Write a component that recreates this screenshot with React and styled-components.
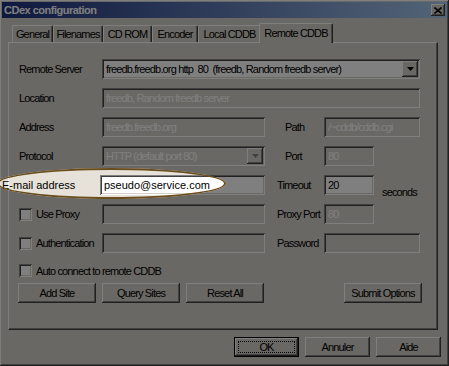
import React from "react";
import styled, { createGlobalStyle } from "styled-components";

const FACE = "#d4d0c8";
const SHADOW = "#808080";
const DARK = "#404040";
const GREYED = "#ffffff";
const UI = `"Liberation Sans", Arial, sans-serif`;

const GlobalStyle = createGlobalStyle`
  html, body {
    margin: 0;
    padding: 0;
    background: ${FACE};
    overflow: hidden;
  }
  body {
    font-family: ${UI};
    font-size: 11px;
    letter-spacing: -0.85px;
    color: #000;
  }
`;

const raised = `
  box-shadow: inset -1px -1px ${DARK}, inset 1px 1px #fff,
    inset -2px -2px ${SHADOW}, inset 2px 2px ${FACE};
`;

const sunken = `
  box-shadow: inset 1px 1px ${SHADOW}, inset -1px -1px #fff,
    inset 2px 2px ${DARK}, inset -2px -2px ${FACE};
`;

const Window = styled.div`
  position: relative;
  z-index: 0;
  width: 449px;
  height: 366px;
  box-sizing: border-box;
  padding: 2px;
  background: ${FACE};
  ${raised}
  display: flex;
  flex-direction: column;
`;

const TitleBar = styled.div`
  height: 16px;
  display: flex;
  align-items: center;
  justify-content: space-between;
  padding: 0 2px;
  background: linear-gradient(to right, #1e307c, #a6caf0);
`;

const Title = styled.span`
  font-weight: bold;
  font-size: 11px;
  letter-spacing: -0.5px;
  color: #fff;
`;

const CloseButton = styled.div`
  width: 14px;
  height: 12px;
  background: ${FACE};
  ${raised}
  display: flex;
  align-items: center;
  justify-content: center;
`;

const TabStrip = styled.div`
  display: flex;
  align-items: flex-end;
  height: 19px;
  margin: 5px 0 0 8px;
  padding-left: 2px;
`;

const Tab = styled.div`
  position: relative;
  z-index: ${(p) => (p.$active ? 2 : 1)};
  box-sizing: border-box;
  width: ${(p) => p.$w + (p.$active ? 4 : 0)}px;
  height: ${(p) => (p.$active ? 20 : 17)}px;
  margin: 0 ${(p) => (p.$active ? -2 : 0)}px ${(p) => (p.$active ? -1 : 0)}px;
  padding-bottom: ${(p) => (p.$active ? 2 : 0)}px;
  display: flex;
  align-items: center;
  justify-content: center;
  background: ${FACE};
  border-top: 1px solid #fff;
  border-left: 1px solid #fff;
  border-right: 1px solid ${DARK};
  border-radius: 2px 2px 0 0;
  box-shadow: inset -1px 0 ${SHADOW};
  white-space: nowrap;
`;

const Panel = styled.div`
  box-sizing: border-box;
  width: 430px;
  height: 288px;
  margin-left: 6px;
  padding: 16px 0 0 10px;
  border-top: 1px solid #fff;
  border-left: 1px solid #fff;
  border-right: 1px solid ${DARK};
  border-bottom: 1px solid ${DARK};
  box-shadow: inset -1px -1px ${SHADOW};
`;

const Form = styled.div`
  display: grid;
  grid-template-columns: 83px 163px 59px 96px;
  grid-auto-rows: 20px;
  row-gap: 9px;
`;

const Label = styled.span`
  grid-column: ${(p) => p.$col || "1"};
  align-self: center;
  padding-left: ${(p) => p.$indent || 0}px;
  margin-left: ${(p) => p.$shift || 0}px;
  white-space: nowrap;
  ${(p) => p.$plain && `letter-spacing: 0;`}
`;

const Cell = styled.div`
  grid-column: ${(p) => p.$col || "auto"};
  display: flex;
  align-items: center;
  gap: 8px;
`;

const Field = styled.div`
  grid-column: ${(p) => p.$col || "auto"};
  position: relative;
  box-sizing: border-box;
  width: ${(p) => (p.$w ? `${p.$w}px` : "auto")};
  height: 20px;
  margin-left: ${(p) => p.$shift || 0}px;
  padding: 0 4px;
  display: flex;
  align-items: center;
  white-space: pre;
  overflow: hidden;
  background: ${(p) => (p.$disabled ? FACE : "#fff")};
  color: ${(p) => (p.$disabled ? GREYED : "#000")};
  ${sunken}
  ${(p) => p.$plain && `letter-spacing: 0;`}
`;

const DropButton = styled.div`
  position: absolute;
  top: 2px;
  right: 2px;
  width: 16px;
  height: 16px;
  background: ${FACE};
  ${raised}
  display: flex;
  align-items: center;
  justify-content: center;
`;

const Unit = styled.span`
  align-self: flex-end;
  margin-bottom: -3px;
`;

const Check = styled.label`
  grid-column: ${(p) => p.$col || "1"};
  display: flex;
  align-items: center;
  gap: 4px;
  white-space: nowrap;
`;

const Box = styled.span`
  width: 13px;
  height: 13px;
  box-sizing: border-box;
  background: #fff;
  ${sunken}
`;

const AutoRow = styled(Check)`
  margin-top: 11px;
  height: 13px;
`;

const ButtonRow = styled.div`
  display: grid;
  grid-template-columns: 78px 78px 78px 1fr 78px;
  column-gap: 6px;
  width: 404px;
  margin: 6px 0 0 -1px;
`;

const Button = styled.div`
  grid-column: ${(p) => p.$col || "auto"};
  box-sizing: border-box;
  height: 20px;
  display: flex;
  align-items: center;
  justify-content: center;
  background: ${FACE};
  ${raised}
  ${(p) =>
    p.$default &&
    `
    border: 1px solid #000;
    outline: 1px dotted #000;
    outline-offset: -5px;
  `}
`;

const DialogButtons = styled.div`
  display: grid;
  grid-template-columns: repeat(3, 65px);
  column-gap: 6px;
  justify-content: end;
  margin: 7px 6px 0 0;
`;

const SpotFill = styled.div`
  position: absolute;
  left: -3px;
  top: 168px;
  width: 229px;
  height: 31px;
  border-radius: 50%;
  background: #e6e2d9;
  z-index: -1;
`;

const SpotRing = styled.div`
  position: absolute;
  left: -3px;
  top: 168px;
  width: 229px;
  height: 31px;
  box-sizing: border-box;
  border-radius: 50%;
  border: 2px solid #6a4d1c;
  box-shadow: 0 0 0 2000px rgba(0, 0, 0, 0.5);
  pointer-events: none;
  z-index: 10;
`;

const Arrow = ({ color = "#000" }) => (
  <svg width="7" height="4" viewBox="0 0 7 4">
    <path d="M0 0h7L3.5 4z" fill={color} />
  </svg>
);

const tabs = [
  { label: "General", w: 41 },
  { label: "Filenames", w: 50 },
  { label: "CD ROM", w: 49 },
  { label: "Encoder", w: 46 },
  { label: "Local CDDB", w: 63 },
  { label: "Remote CDDB", w: 70, active: true },
];

export default function App() {
  return (
    <>
      <GlobalStyle />
      <Window>
        <TitleBar>
          <Title>CDex configuration</Title>
          <CloseButton>
            <svg width="8" height="7" viewBox="0 0 8 7">
              <path d="M0.5 0.5L7.5 6.5M7.5 0.5L0.5 6.5" stroke="#000" strokeWidth="1.6" />
            </svg>
          </CloseButton>
        </TitleBar>

        <TabStrip>
          {tabs.map((t) => (
            <Tab key={t.label} $w={t.w} $active={t.active}>
              {t.label}
            </Tab>
          ))}
        </TabStrip>

        <Panel>
          <Form>
            <Label>Remote Server</Label>
            <Field $col="2 / 5">
              {"freedb.freedb.org http  80  (freedb, Random freedb server)"}
              <DropButton>
                <Arrow />
              </DropButton>
            </Field>

            <Label>Location</Label>
            <Field $col="2 / 5" $disabled>
              freedb, Random freedb server
            </Field>

            <Label>Address</Label>
            <Field $col="2" $disabled>
              freedb.freedb.org
            </Field>
            <Label $col="3" $indent={20}>
              Path
            </Label>
            <Field $col="4" $disabled>
              /~cddb/cddb.cgi
            </Field>

            <Label>Protocol</Label>
            <Field $col="2" $disabled>
              HTTP (default port 80)
              <DropButton>
                <Arrow color={SHADOW} />
              </DropButton>
            </Field>
            <Label $col="3" $indent={20}>
              Port
            </Label>
            <Cell $col="4">
              <Field $w={50} $disabled>
                80
              </Field>
            </Cell>

            <Label $shift={-17} $plain>
              E-mail address
            </Label>
            <Field $col="2" $shift={-2} $plain>
              pseudo@service.com
            </Field>
            <Label $col="3" $indent={12}>
              Timeout
            </Label>
            <Cell $col="4">
              <Field $w={50}>20</Field>
              <Unit>seconds</Unit>
            </Cell>

            <Check>
              <Box />
              Use Proxy
            </Check>
            <Field $col="2" $disabled />
            <Label $col="3" $indent={12}>
              Proxy Port
            </Label>
            <Cell $col="4">
              <Field $w={50} $disabled>
                80
              </Field>
            </Cell>

            <Check>
              <Box />
              Authentication
            </Check>
            <Field $col="2" $disabled />
            <Label $col="3" $indent={12}>
              Password
            </Label>
            <Field $col="4" $disabled />
          </Form>

          <AutoRow>
            <Box />
            Auto connect to remote CDDB
          </AutoRow>

          <ButtonRow>
            <Button>Add Site</Button>
            <Button>Query Sites</Button>
            <Button>Reset All</Button>
            <Button $col="5">Submit Options</Button>
          </ButtonRow>
        </Panel>

        <DialogButtons>
          <Button $default>OK</Button>
          <Button>Annuler</Button>
          <Button>Aide</Button>
        </DialogButtons>

        <SpotFill />
        <SpotRing />
      </Window>
    </>
  );
}
